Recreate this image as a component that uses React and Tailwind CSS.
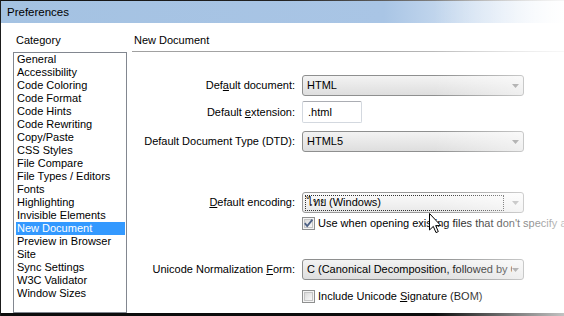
import React from "react";

const categories = [
  "General",
  "Accessibility",
  "Code Coloring",
  "Code Format",
  "Code Hints",
  "Code Rewriting",
  "Copy/Paste",
  "CSS Styles",
  "File Compare",
  "File Types / Editors",
  "Fonts",
  "Highlighting",
  "Invisible Elements",
  "New Document",
  "Preview in Browser",
  "Site",
  "Sync Settings",
  "W3C Validator",
  "Window Sizes",
];

const Arrow = ({ color = "#707070" }) => (
  <svg width="7" height="4" viewBox="0 0 7 4" className="shrink-0">
    <path d="M0 0h7L3.5 4z" fill={color} />
  </svg>
);

const Combo = ({ children, light }) => (
  <div
    className={
      light
        ? "flex h-[21px] w-[222px] items-center rounded-[3px] border border-[#9a9a9a] bg-gradient-to-b from-[#fbfbfb] to-[#e9e9e9] pr-[4px]"
        : "flex h-[21px] w-[222px] items-center rounded-[3px] border border-[#8e8f8f] bg-gradient-to-b from-[#f3f3f3] to-[#dedede] pr-[4px]"
    }
  >
    <div className="flex h-full min-w-0 flex-1 items-center overflow-hidden">{children}</div>
    <Arrow color={light ? "#9c9c9c" : "#737373"} />
  </div>
);

const Row = ({ label, children, className }) => (
  <div className={"flex items-center " + className}>
    <div className="w-[163px] shrink-0 text-right">{label}</div>
    <div className="ml-[7px]">{children}</div>
  </div>
);

const Checkbox = ({ checked }) => (
  <svg width="13" height="13" viewBox="0 0 13 13" className="shrink-0">
    <defs>
      <linearGradient id={checked ? "cbg1" : "cbg2"} x1="0" y1="0" x2="1" y2="1">
        <stop offset="0" stopColor="#d8d8d8" />
        <stop offset="1" stopColor="#fbfbfb" />
      </linearGradient>
    </defs>
    <rect x="0.5" y="0.5" width="12" height="12" fill="#f4f4f4" stroke="#8e8f8f" />
    <rect x="2.5" y="2.5" width="8" height="8" fill={`url(#${checked ? "cbg1" : "cbg2"})`} stroke="#c4c4c4" />
    {checked && (
      <path d="M2.8 6.2 L5.2 9 L10.4 2.6" fill="none" stroke="#4d6185" strokeWidth="1.8" />
    )}
  </svg>
);

const U = ({ children }) => <span className="underline underline-offset-[1px]">{children}</span>;

export default function App() {
  return (
    <div className="relative flex h-[316px] w-[564px] flex-col overflow-hidden border-l border-[#1b1b1b] bg-white font-['Liberation_Sans','Noto_Sans',sans-serif] text-[11px] leading-[13px] text-black">
      <div className="h-[1px] bg-gradient-to-r from-[#111] via-[#222] to-[#ddd]" />
      <div className="flex h-[22px] items-center bg-[linear-gradient(to_right,#a4c2e2_0%,#a9c5e5_68%,#dbe7f5_88%,#ffffff_100%)] pl-[6px] text-[11.5px]">
        Preferences
      </div>

      <div className="flex flex-1">
        <div className="w-[131px] shrink-0 pl-[12px] pt-[11px]">
          <div className="pl-[3px]">Category</div>
          <div className="mt-[5px] h-[261px] w-[114px] overflow-hidden border border-[#828790] pl-[2px] pr-[1px]">
            {categories.map((c) => (
              <div
                key={c}
                className={
                  c === "New Document"
                    ? "h-[13px] bg-[#3399ff] pl-[1px] text-white"
                    : "h-[13px] pl-[1px]"
                }
              >
                {c}
              </div>
            ))}
          </div>
        </div>

        <div className="flex-1 pt-[11px]">
          <div className="pl-[2px]">New Document</div>
          <div className="mt-[4px] h-[1px] bg-gradient-to-r from-[#a0a0a0] via-[#a8a8a8] to-[#f4f4f4]" />

          <Row
            className="mt-[23px]"
            label={
              <>
                Def<U>a</U>ult document:
              </>
            }
          >
            <Combo>
              <span className="pl-[4px]">HTML</span>
            </Combo>
          </Row>

          <Row
            className="mt-[5px]"
            label={
              <>
                Default <U>e</U>xtension:
              </>
            }
          >
            <div className="flex h-[22px] w-[60px] items-center rounded-[2px] border border-[#d3d8df] border-t-[#abadb3] pl-[5px]">
              .html
            </div>
          </Row>

          <Row className="mt-[8px]" label="Default Document Type (DTD):">
            <Combo>
              <span className="pl-[4px]">HTML5</span>
            </Combo>
          </Row>

          <Row
            className="mt-[40px]"
            label={
              <>
                <U>D</U>efault encoding:
              </>
            }
          >
            <Combo light>
              <div className="ml-[2px] flex h-[16px] w-[199px] items-center border border-dotted border-[#333] pl-[1px]">
                ไทย (Windows)
              </div>
            </Combo>
          </Row>

          <div className="mt-[4px] flex h-[13px] items-center pl-[170px]">
            <Checkbox checked />
            <span className="ml-[3px] whitespace-nowrap">
              Use when opening existing files that don't specify an encoding
            </span>
          </div>

          <Row
            className="mt-[29px]"
            label={
              <>
                Unicode Normalization <U>F</U>orm:
              </>
            }
          >
            <Combo>
              <span className="whitespace-nowrap pl-[4px]">
                C (Canonical Decomposition, followed by Canonical Composition)
              </span>
            </Combo>
          </Row>

          <div className="mt-[10px] flex h-[13px] items-center pl-[170px]">
            <Checkbox />
            <span className="ml-[3px] whitespace-nowrap">
              Include Unicode <U>S</U>ignature (BOM)
            </span>
          </div>
        </div>
      </div>

      <div className="h-[3px] bg-[#0c0c0c]" />

      {/* mouse pointer */}
      <svg className="pointer-events-none absolute left-[428px] top-[213px]" width="13" height="21" viewBox="0 0 13 21">
        <path d="M0.5 0.5 L0.5 17 L4.3 13.4 L7 19.6 L9.3 18.6 L6.7 12.6 L11.8 12.6 Z" fill="#fff" stroke="#000" strokeWidth="1" />
      </svg>

      {/* right edge fade */}
      <div className="pointer-events-none absolute right-0 top-0 h-full w-[130px] bg-gradient-to-r from-white/0 to-white/75" />
    </div>
  );
}
